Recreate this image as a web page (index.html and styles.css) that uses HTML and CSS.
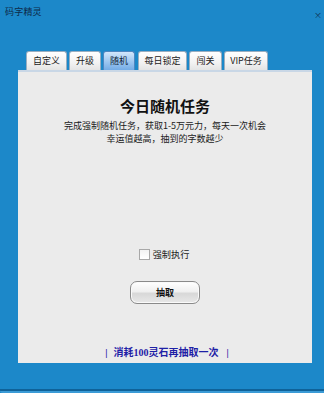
FILE: index.html
```html
<!DOCTYPE html>
<html lang="zh">
<head>
<meta charset="utf-8">
<title>码字精灵</title>
<link rel="stylesheet" href="styles.css">
</head>
<body>
<div class="window">
  <div class="titlebar">
    <span class="app-title">码字精灵</span>
    <span class="close">×</span>
  </div>
  <div class="tabs">
    <div class="tab t1">自定义</div>
    <div class="tab t2">升级</div>
    <div class="tab t3 active">随机</div>
    <div class="tab t4">每日锁定</div>
    <div class="tab t5">闯关</div>
    <div class="tab t6">VIP任务</div>
  </div>
  <div class="panel">
    <h1 class="heading">今日随机任务</h1>
    <div class="desc">
      <div class="desc-line">完成强制随机任务，获取1-5万元力，每天一次机会</div>
      <div class="desc-line">幸运值越高，抽到的字数越少</div>
    </div>
    <label class="check-row"><span class="box"></span><span class="check-label">强制执行</span></label>
    <div class="btn-row"><button class="draw-btn">抽取</button></div>
    <div class="link-row"><span class="bar">|</span><span class="link-text">消耗100灵石再抽取一次</span><span class="bar">|</span></div>
  </div>
  <div class="bottom-edge"></div>
</div>
</body>
</html>
```
FILE: styles.css
```css
html, body {
  margin: 0;
  padding: 0;
}
body {
  width: 324px;
  height: 393px;
  overflow: hidden;
  background: #1b87c9;
  font-family: "Noto Sans CJK SC", "Noto Sans", sans-serif;
}
.window {
  width: 324px;
  height: 393px;
  display: flex;
  flex-direction: column;
  background: #1c88c9;
}
.titlebar {
  height: 51px;
  display: flex;
  justify-content: space-between;
  align-items: flex-start;
  padding: 6px 2px 0 5px;
  box-sizing: border-box;
}
.app-title {
  font-size: 9px;
  line-height: 12px;
  color: #0e2a48;
  letter-spacing: 0.2px;
}
.close {
  font-size: 8px;
  line-height: 10px;
  margin-top: 4px;
  color: #0c3050;
}
.tabs {
  display: flex;
  gap: 2px;
  margin-left: 26px;
  height: 19px;
  align-items: flex-end;
}
.tab {
  height: 19px;
  box-sizing: border-box;
  border: 1px solid #9aaec0;
  border-bottom: none;
  border-radius: 3px 3px 0 0;
  background: linear-gradient(#ffffff, #f2f2f2 60%, #e4e4e4);
  font-size: 9px;
  line-height: 18px;
  color: #1a1a1a;
  text-align: center;
}
.t1 { width: 41px; }
.t2 { width: 32px; }
.t3 { width: 32px; }
.t4 { width: 49px; margin-left: 1px; }
.t5 { width: 33px; }
.t6 { width: 44px; }
.tab.active {
  background: linear-gradient(#d2e6fb, #9cc6f0 55%, #74ace6);
  border-color: #4f86c0;
  color: #0e1e36;
}
.panel {
  margin: 0 12px 0 18px;
  height: 293px;
  background: #ebebeb;
  border-top: 2px solid #c9d7e6;
  box-sizing: border-box;
  display: flex;
  flex-direction: column;
  align-items: center;
}
.heading {
  margin: 25px 0 0;
  font-size: 15px;
  line-height: 18px;
  font-weight: bold;
  color: #111;
}
.desc {
  margin: 4px 0 0;
  font-size: 9px;
  text-align: center;
  color: #1a1a1a;
}
.desc-line {
  line-height: 13px;
}
.check-row {
  margin-top: 103px;
  display: flex;
  align-items: center;
  gap: 3px;
  height: 12px;
  margin-left: -2px;
}
.box {
  width: 9px;
  height: 9px;
  border: 1px solid #a8a8a8;
  background: linear-gradient(#f2f2f2, #ffffff);
}
.check-label {
  font-size: 9.2px;
  line-height: 12px;
  color: #222;
}
.btn-row {
  margin-top: 17px;
}
.draw-btn {
  width: 70px;
  height: 23px;
  border: 1px solid #8a8a8a;
  border-radius: 7px;
  background: linear-gradient(#ffffff, #f0f0f0 45%, #d8d8d8 55%, #e8e8e8);
  box-shadow: inset 0 0 0 1px #fafafa;
  font-family: "Noto Sans CJK SC", sans-serif;
  font-size: 9px;
  font-weight: bold;
  color: #111;
  padding: 0;
}
.link-row {
  margin-top: 43px;
  display: flex;
  align-items: center;
  gap: 6px;
  margin-left: 4px;
  font-family: "Liberation Serif", "Noto Sans CJK SC", serif;
  font-size: 10px;
  line-height: 12px;
  font-weight: bold;
  color: #1e20a6;
}
.link-text {
  margin-right: 2px;
}
.bottom-edge {
  margin-top: auto;
  height: 4px;
  border-top: 2px solid #0f6299;
  background: #3b9bd6;
  border-radius: 0 0 0 3px;
  box-sizing: border-box;
}
```
